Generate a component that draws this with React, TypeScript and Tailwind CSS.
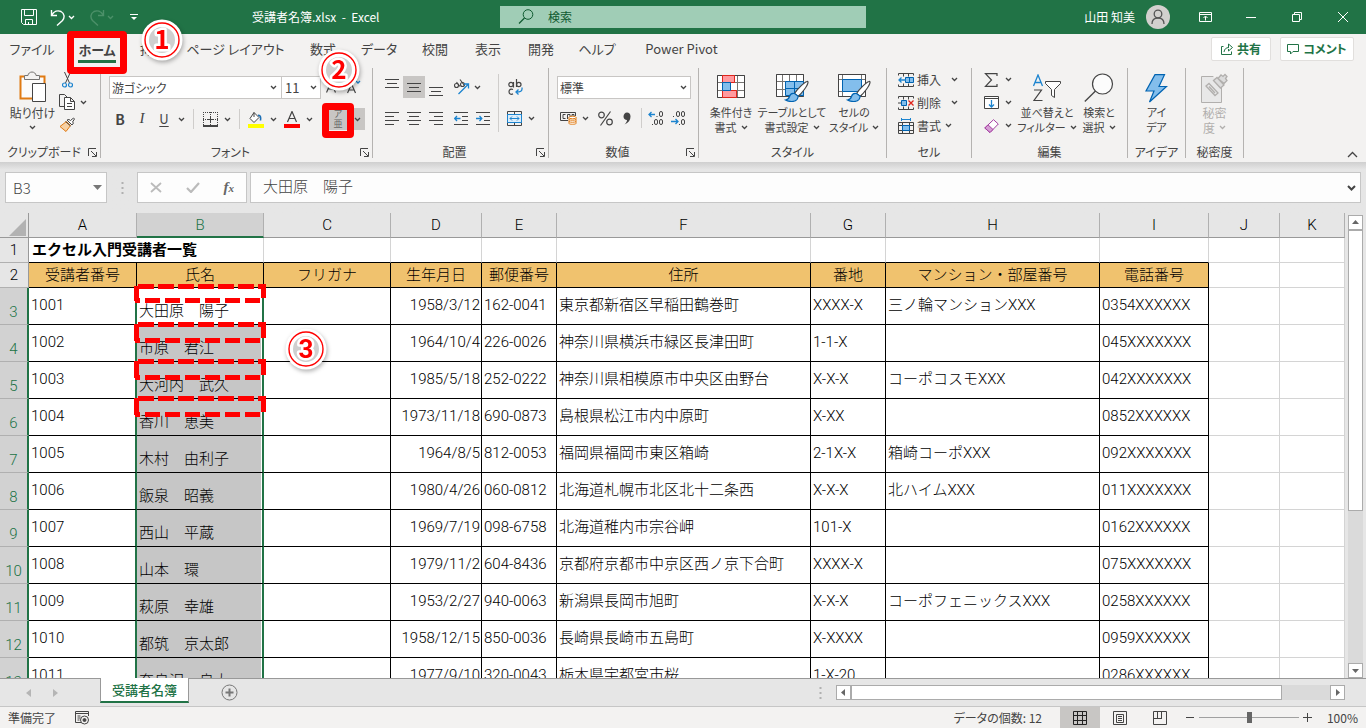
import { ReactNode } from 'react';
import clsx from 'clsx';

type Member = {
  id: string;
  name: string;
  birthday: string;
  zip: string;
  address: string;
  block: string;
  building: string;
  phone: string;
};

const members: Member[] = [
  { id: '1001', name: '大田原　陽子', birthday: '1958/3/12', zip: '162-0041', address: '東京都新宿区早稲田鶴巻町', block: 'XXXX-X', building: '三ノ輪マンションXXX', phone: '0354XXXXXX' },
  { id: '1002', name: '市原　君江', birthday: '1964/10/4', zip: '226-0026', address: '神奈川県横浜市緑区長津田町', block: '1-1-X', building: '', phone: '045XXXXXXX' },
  { id: '1003', name: '大河内　武久', birthday: '1985/5/18', zip: '252-0222', address: '神奈川県相模原市中央区由野台', block: 'X-X-X', building: 'コーポコスモXXX', phone: '042XXXXXXX' },
  { id: '1004', name: '香川　恵美', birthday: '1973/11/18', zip: '690-0873', address: '島根県松江市内中原町', block: 'X-XX', building: '', phone: '0852XXXXXX' },
  { id: '1005', name: '木村　由利子', birthday: '1964/8/5', zip: '812-0053', address: '福岡県福岡市東区箱崎', block: '2-1X-X', building: '箱崎コーポXXX', phone: '092XXXXXXX' },
  { id: '1006', name: '飯泉　昭義', birthday: '1980/4/26', zip: '060-0812', address: '北海道札幌市北区北十二条西', block: 'X-X-X', building: '北ハイムXXX', phone: '011XXXXXXX' },
  { id: '1007', name: '西山　平蔵', birthday: '1969/7/19', zip: '098-6758', address: '北海道稚内市宗谷岬', block: '101-X', building: '', phone: '0162XXXXXX' },
  { id: '1008', name: '山本　環', birthday: '1979/11/2', zip: '604-8436', address: '京都府京都市中京区西ノ京下合町', block: 'XXXX-X', building: '', phone: '075XXXXXXX' },
  { id: '1009', name: '萩原　幸雄', birthday: '1953/2/27', zip: '940-0063', address: '新潟県長岡市旭町', block: 'X-X-X', building: 'コーポフェニックスXXX', phone: '0258XXXXXX' },
  { id: '1010', name: '都筑　京太郎', birthday: '1958/12/15', zip: '850-0036', address: '長崎県長崎市五島町', block: 'X-XXXX', building: '', phone: '0959XXXXXX' },
  { id: '1011', name: '奈良沢　良太', birthday: '1977/9/10', zip: '320-0043', address: '栃木県宇都宮市桜', block: '1-X-20', building: '', phone: '0286XXXXXX' },
];

const columns = ['A', 'B', 'C', 'D', 'E', 'F', 'G', 'H', 'I', 'J', 'K'];

const headings = [
  '受講者番号',
  '氏名',
  'フリガナ',
  '生年月日',
  '郵便番号',
  '住所',
  '番地',
  'マンション・部屋番号',
  '電話番号',
];

function Svg({
  w,
  h,
  children,
  className,
}: {
  w: number;
  h: number;
  children: ReactNode;
  className?: string;
}) {
  return (
    <svg
      width={w}
      height={h}
      viewBox={`0 0 ${w} ${h}`}
      fill="none"
      stroke="currentColor"
      aria-hidden="true"
      className={clsx('shrink-0', className)}
    >
      {children}
    </svg>
  );
}

function Chevron({ className }: { className?: string }) {
  return (
    <Svg w={7} h={5} className={className}>
      <path d="M1 1l2.5 2.5L6 1" strokeWidth="1.3" />
    </Svg>
  );
}

function ToolButton({
  label,
  className,
  children,
}: {
  label: string;
  className?: string;
  children: ReactNode;
}) {
  return (
    <button
      type="button"
      aria-label={label}
      className={clsx('flex h-[22px] items-center justify-center', className)}
    >
      {children}
    </button>
  );
}

function MenuArrow({ label, className = 'w-[13px]' }: { label: string; className?: string }) {
  return (
    <ToolButton label={label} className={className}>
      <Chevron />
    </ToolButton>
  );
}

function BigButton({
  icon,
  lines,
  arrow,
  className,
}: {
  icon: ReactNode;
  lines: [string, string];
  arrow?: boolean;
  className?: string;
}) {
  return (
    <button
      type="button"
      className={clsx('flex flex-col items-center whitespace-nowrap leading-[15px]', className)}
    >
      <span className="flex h-[34px] items-center justify-center">{icon}</span>
      <span>{lines[0]}</span>
      <span className="flex items-center gap-1">
        {lines[1]}
        {arrow ? <Chevron /> : null}
      </span>
    </button>
  );
}

function Group({
  title,
  launcher,
  className,
  children,
}: {
  title: string;
  launcher?: boolean;
  className: string;
  children: ReactNode;
}) {
  return (
    <section
      aria-label={title}
      className={clsx('flex h-[90px] shrink-0 flex-col border-r border-[#b5b3b1]', className)}
    >
      <div className="flex min-h-0 flex-1">{children}</div>
      <div className="flex h-3 items-center text-xs leading-3">
        <span className="flex-1 text-center">{title}</span>
        {launcher ? (
          <button type="button" aria-label={`${title}の設定`} className="mr-[3px]">
            <Svg w={9} h={9}>
              <path d="M.5 8V.5H8M3 3l5 5M8.5 4v4.5H4" />
            </Svg>
          </button>
        ) : null}
      </div>
    </section>
  );
}

function Badge({ n, className }: { n: number; className: string }) {
  return (
    <svg
      width="46"
      height="46"
      viewBox="0 0 46 46"
      role="img"
      aria-label={`手順${n}`}
      className={clsx('absolute z-20 drop-shadow-[1px_2px_2px_rgba(0,0,0,0.3)]', className)}
    >
      <circle cx="23" cy="23" r="20.5" fill="#fff" />
      <circle cx="23" cy="23" r="13" fill="#cfcfcf" />
      <circle cx="23" cy="23" r="17" fill="none" stroke="#f00" strokeWidth="1.4" />
      <text
        x="23"
        y="32"
        textAnchor="middle"
        fill="#f00"
        stroke="#fff"
        strokeWidth="5"
        strokeLinejoin="round"
        paintOrder="stroke"
        className="text-[26px] font-bold"
      >
        {n}
      </text>
    </svg>
  );
}

/* 横線を並べた配置アイコン */
function Lines({ kind, rows = 4 }: { kind: 'left' | 'center' | 'right'; rows?: number }) {
  const lines = Array.from({ length: rows }, (_, i) => {
    const short = i % 2 === 1;
    const x1 = !short || kind === 'left' ? 0 : kind === 'center' ? 2 : 5;
    const x2 = !short || kind === 'right' ? 14 : kind === 'center' ? 12 : 9;
    return `M${x1} ${i * 4 + 0.5}H${x2}`;
  });
  return (
    <Svg w={14} h={rows * 4 - 3}>
      <path d={lines.join('')} />
    </Svg>
  );
}

function Indent({ out }: { out?: boolean }) {
  return (
    <Svg w={14} h={13}>
      <path d="M0 .5H14M8 4.5h6M8 8.5h6M0 12.5H14" />
      <path
        d={out ? 'M6.5 6.5H1M3 4L.7 6.5 3 9' : 'M0 6.5h5.5M3.5 4l2.3 2.5L3.5 9'}
        stroke="#1c84cf"
        strokeWidth="1.3"
      />
    </Svg>
  );
}

function Brush() {
  return (
    <>
      <path
        d="M31 7.5c-3 1-9.500 7.500-12.500 12l3.500 3C26 19 31.500 12 32 8.500 32 7.500 31.500 7.300 31 7.500z"
        fill="#fff"
        stroke="#444"
        strokeWidth="1.2"
      />
      <path
        d="M18.5 19.500c-2.500-.5-4.500.8-5 3-.5 2-1.500 3-4 3.500 4 2.200 9.500 2 11.500-.5 1-1.500 1.200-2.500 1-3.500z"
        fill="#83beec"
        stroke="#0063b1"
        strokeWidth="1.2"
      />
    </>
  );
}

const tableLines = 'M.5 .5h27v22H.5zM6.5 0v23M13.5 0v23M20.5 0v23M0 7.5h28M0 15.5h28';

function TitleBar() {
  return (
    <header className="flex h-[34px] shrink-0 items-center bg-[#217346] text-xs text-white">
      <div className="flex w-[252px] items-center pl-[14px]">
        <ToolButton label="上書き保存" className="w-[30px]">
          <Svg w={16} h={16}>
            <path d="M.5 .5h15v15h-13l-2-2zM3.5 .5v6h9v-6M4.5 15.5v-5h7v5M7.5 13v2.5" />
          </Svg>
        </ToolButton>
        <ToolButton label="元に戻す" className="w-7">
          <Svg w={16} h={17}>
            <path d="M1.5 1v5.5H7M1.5 6.500C4 2 8 1 11 2.500c3.500 2 4 6 1.500 9L7 16.500" strokeWidth="1.4" />
          </Svg>
        </ToolButton>
        <Chevron className="-ml-1 mt-px" />
        <ToolButton label="やり直し" className="ml-2 w-7 text-[#4c9069]">
          <Svg w={16} h={17}>
            <path d="M14.5 1v5.5H9M14.5 6.500C12 2 8 1 5 2.500 1.500 4.500 1 8.500 3.500 11.500L9 16.500" strokeWidth="1.4" />
          </Svg>
        </ToolButton>
        <Chevron className="-ml-1 mt-px text-[#4c9069]" />
        <ToolButton label="クイック アクセス" className="ml-2 w-6">
          <Svg w={8} h={7}>
            <path d="M0 .5h8" />
            <path d="M1 3h6L4 6z" fill="currentColor" stroke="none" />
          </Svg>
        </ToolButton>
      </div>
      <h1 className="w-[248px] whitespace-pre">受講者名簿.xlsx  -  Excel</h1>
      <label className="flex h-[22px] w-[366px] items-center bg-[#a0cdb6] pl-[18px] text-[#0f5a30]">
        <Svg w={16} h={16}>
          <circle cx="10" cy="5.5" r="4.8" />
          <path d="M6.5 9L1 14.5" strokeWidth="1.3" />
        </Svg>
        <input
          type="search"
          aria-label="検索"
          placeholder="検索"
          className="ml-[14px] min-w-0 flex-1 bg-transparent outline-none placeholder:text-[#0f5a30]"
        />
      </label>
      <div className="flex flex-1 items-center justify-end">
        <span>山田 知美</span>
        <Svg w={24} h={24} className="ml-[11px] mr-3">
          <circle cx="12" cy="12" r="12" fill="#d2d0ce" stroke="none" />
          <g stroke="#555" strokeWidth="1.3">
            <circle cx="12" cy="9" r="3.8" />
            <path d="M6 19c0-4 2.500-6 6-6s6 2 6 6" />
          </g>
        </Svg>
        <ToolButton label="リボンの表示オプション" className="w-[46px]">
          <Svg w={13} h={10}>
            <path d="M.5 .5h12v9H.5zM0 2.500h13M6.500 8.500v-4M4.500 6l2-2 2 2" />
          </Svg>
        </ToolButton>
        <ToolButton label="最小化" className="w-[46px]">
          <Svg w={10} h={1}>
            <path d="M0 .5h10" />
          </Svg>
        </ToolButton>
        <ToolButton label="元のサイズに戻す" className="w-[46px]">
          <Svg w={10} h={10}>
            <path d="M.5 2.500h7v7h-7zM2.500 2.500v-2h7v7h-2" />
          </Svg>
        </ToolButton>
        <ToolButton label="閉じる" className="w-[46px]">
          <Svg w={10} h={10}>
            <path d="M0 0l10 10M10 0L0 10" />
          </Svg>
        </ToolButton>
      </div>
    </header>
  );
}

function TabRow() {
  const tab = 'shrink-0 whitespace-nowrap text-center';
  return (
    <nav className="flex h-[34px] shrink-0 items-center pb-1 text-[13px]">
      <button type="button" className={`${tab} w-16`}>ファイル</button>
      <button type="button" className={`${tab} relative w-[66px] font-bold`}>
        <span className="inline-block border-b-[3px] border-[#217346] pt-1 leading-5">ホーム</span>
        <span className="absolute -top-[5px] left-[3px] h-[43px] w-[60px] rounded-[4px] border-[7px] border-[#f00]" />
      </button>
      <button type="button" className={`${tab} relative w-[46px]`}>
        挿入
        <Badge n={1} className="-top-[23px] left-[9px]" />
      </button>
      <button type="button" className={`${tab} w-[119px]`}>ページ レイアウト</button>
      <button type="button" className={`${tab} relative w-14`}>
        数式
        <Badge n={2} className="left-[21px] top-[7px]" />
      </button>
      <button type="button" className={`${tab} w-14`}>データ</button>
      <button type="button" className={`${tab} w-14`}>校閲</button>
      <button type="button" className={`${tab} w-[50px]`}>表示</button>
      <button type="button" className={`${tab} w-14`}>開発</button>
      <button type="button" className={`${tab} w-14`}>ヘルプ</button>
      <button type="button" className={`${tab} w-[113px]`}>Power Pivot</button>
      <div className="ml-auto flex gap-[9px] pr-3 text-xs font-bold text-[#217346]">
        <button type="button" className="flex h-6 w-[60px] items-center justify-center gap-1 rounded-[2px] border border-[#e1dfdd] bg-white">
          <Svg w={12} h={12}>
            <path d="M2.500 3.500h-2v8h10v-3M3 9c.5-3 2-4.500 5-4.500M7.500 1l4 3.500-4 3.500V6M7.500 1v3" />
          </Svg>
          共有
        </button>
        <button type="button" className="flex h-6 w-[74px] items-center justify-center gap-1 rounded-[2px] border border-[#e1dfdd] bg-white">
          <Svg w={12} h={11}>
            <path d="M.5 .5h11v7H6L3.500 10V7.500h-3z" />
          </Svg>
          コメント
        </button>
      </div>
    </nav>
  );
}

function ClipboardGroup() {
  return (
    <Group title="クリップボード" launcher className="w-[101px]">
      <button type="button" className="flex w-[61px] flex-col items-center whitespace-nowrap pl-1 pt-[3px] leading-[15px]">
        <Svg w={28} h={32}>
          <path d="M5 5.500H1.500v22h24V5.500H21" stroke="#e07a12" strokeWidth="2" fill="#fcfbfa" />
          <path d="M5.500 8.500v-4h3.500c0-2 2-3.500 4-3.500s4 1.500 4 3.500h3.500v4z" fill="#f3f2f1" stroke="#767472" />
          <path d="M13.500 12.500h13v18h-13z" fill="#fff" stroke="#444" />
        </Svg>
        <span className="pt-[2px]">貼り付け</span>
        <Chevron className="mt-[5px]" />
      </button>
      <div className="flex w-[38px] flex-col pt-px">
        <ToolButton label="切り取り" className="w-3">
          <Svg w={11} h={16}>
            <path d="M2.500 0l5 11M8.500 0l-5 11" />
            <g stroke="#1c84cf" strokeWidth="1.2">
              <circle cx="2.5" cy="13" r="2" />
              <circle cx="8.5" cy="13" r="2" />
            </g>
          </Svg>
        </ToolButton>
        <div className="flex">
          <ToolButton label="コピー" className="h-6 w-3">
            <Svg w={16} h={16}>
              <path d="M5 12.500H.5V.5h5l3 3" />
              <path d="M5.500 3.500h6l4 4v8h-10zM11.500 3.500v4h4M8 9.500h5M8 12.500h5" fill="#fff" />
            </Svg>
          </ToolButton>
          <MenuArrow label="コピーのオプション" className="ml-1 h-6 w-3" />
        </div>
        <ToolButton label="書式のコピー" className="w-3">
          <Svg w={16} h={15}>
            <path d="M7.500 4.500L1 9.500l6 5 4.500-6z" fill="#f7d1a4" stroke="#e07a12" />
            <path d="M6.500 4.500l5 4.500M8 3l5 5 1.500-2-1-1L15.500 2l-1-1-3 2.500-1.500-1z" fill="#fff" stroke="#444" />
          </Svg>
        </ToolButton>
      </div>
    </Group>
  );
}

function FontGroup() {
  return (
    <Group title="フォント" launcher className="w-[272px]">
      <div className="flex flex-col pl-2 pt-2">
        <div className="flex h-[23px]">
          <label className="flex w-[173px] items-center border border-[#c8c6c4] bg-white pr-1 text-xs">
            <select aria-label="フォント" className="min-w-0 flex-1 appearance-none pl-[2px] outline-none">
              <option>游ゴシック</option>
            </select>
            <Chevron />
          </label>
          <label className="-ml-px flex w-10 items-center border border-[#c8c6c4] bg-white pr-[3px] text-[13px]">
            <select aria-label="フォント サイズ" className="min-w-0 flex-1 appearance-none pl-[3px] outline-none">
              <option>11</option>
            </select>
            <Chevron />
          </label>
          <ToolButton label="フォント サイズの拡大" className="w-6">
            <Svg w={14} h={14}>
              <path d="M.5 12.500L5 2l4.500 10.500M2 9h6" strokeWidth="1.2" />
              <path d="M9 4l2-2 2 2" stroke="#1c84cf" strokeWidth="1.3" />
            </Svg>
          </ToolButton>
          <ToolButton label="フォント サイズの縮小" className="w-[18px]">
            <Svg w={14} h={16}>
              <path d="M.5 14L4.500 5l4 9M2 11h5" strokeWidth="1.2" />
              <path d="M9 2l2 2 2-2" stroke="#1c84cf" strokeWidth="1.3" />
            </Svg>
          </ToolButton>
        </div>
        <div className="mt-[9px] flex h-[22px] items-center">
          <ToolButton label="太字" className="w-[22px] text-[14px] font-bold">B</ToolButton>
          <ToolButton label="斜体" className="w-[22px] font-[Liberation_Serif] text-[15px] italic">I</ToolButton>
          <ToolButton label="下線" className="w-[22px] text-[13px] underline underline-offset-2">U</ToolButton>
          <MenuArrow label="下線の種類" />
          <span className="mx-[5px] h-5 w-px bg-[#cfcdcb]" />
          <ToolButton label="罫線" className="w-[22px]">
            <Svg w={15} h={15}>
              <path d="M.5 0v13M7.500 0v13M14.500 0v13M0 .5h15M0 7.500h15" strokeDasharray="1 1" />
              <path d="M4 7.500h7M7.500 4v7" />
              <path d="M0 14h15" strokeWidth="2" />
            </Svg>
          </ToolButton>
          <MenuArrow label="罫線の種類" />
          <span className="mx-[5px] h-5 w-px bg-[#cfcdcb]" />
          <ToolButton label="塗りつぶしの色" className="w-[22px]">
            <Svg w={16} h={17}>
              <path d="M6 1.500l5 5-5 5-4-4zM6 1.500V6" fill="#fff" />
              <path d="M10 4.500c2.500-.5 3 1.500 2.500 5" stroke="#1c6fb5" strokeWidth="1.6" />
              <path d="M0 15h16" stroke="#ff0" strokeWidth="4" />
            </Svg>
          </ToolButton>
          <MenuArrow label="塗りつぶしの色の選択" />
          <ToolButton label="フォントの色" className="ml-px w-[22px]">
            <Svg w={16} h={17}>
              <path d="M3.500 11L8 .5l4.500 10.500M5 7.500h6" strokeWidth="1.2" />
              <path d="M0 15h16" stroke="#f00" strokeWidth="4" />
            </Svg>
          </ToolButton>
          <MenuArrow label="フォントの色の選択" />
          <div className="relative ml-[11px] flex bg-[#c8c6c4]">
            <ToolButton label="ふりがなの表示/非表示" className="w-[22px] flex-col text-[9px] leading-[10px] text-[#666]">
              <span>ア</span>
              <span>亜</span>
            </ToolButton>
            <MenuArrow label="ふりがなの設定" className="w-4" />
            <span className="absolute -left-[5px] -top-[5px] h-[35px] w-8 rounded-[4px] border-[7px] border-[#f00]" />
          </div>
        </div>
      </div>
    </Group>
  );
}

function AlignGroup() {
  return (
    <Group title="配置" launcher className="w-44">
      <div className="flex flex-col pl-2 pt-2">
        <div className="flex h-[22px]">
          <ToolButton label="上揃え" className="w-[22px] pb-2"><Lines kind="center" rows={3} /></ToolButton>
          <ToolButton label="上下中央揃え" className="w-[22px] bg-[#c8c6c4]"><Lines kind="center" rows={3} /></ToolButton>
          <ToolButton label="下揃え" className="w-[22px] pt-2"><Lines kind="center" rows={3} /></ToolButton>
          <ToolButton label="方向" className="ml-[2px] w-6">
            <Svg w={17} h={16}>
              <g strokeWidth="1.1">
                <circle cx="3.5" cy="6.5" r="2" />
                <path d="M3.500 3l3.500 4.500M7 .5l4.500 6" />
                <circle cx="9.5" cy="5.5" r="2" />
              </g>
              <path d="M5.500 15L15.500 5M11 5h4.500v4.500" stroke="#1c84cf" strokeWidth="1.3" />
            </Svg>
          </ToolButton>
          <MenuArrow label="方向の選択" className="w-2" />
        </div>
        <div className="mt-[9px] flex h-[22px]">
          <ToolButton label="左揃え" className="w-[22px]"><Lines kind="left" /></ToolButton>
          <ToolButton label="中央揃え" className="w-[22px]"><Lines kind="center" /></ToolButton>
          <ToolButton label="右揃え" className="w-[22px]"><Lines kind="right" /></ToolButton>
          <ToolButton label="インデントを減らす" className="ml-[3px] w-[22px]"><Indent out /></ToolButton>
          <ToolButton label="インデントを増やす" className="w-[22px]"><Indent /></ToolButton>
        </div>
      </div>
      <span className="ml-1 mt-[6px] h-[58px] w-px bg-[#cfcdcb]" />
      <div className="flex flex-col pl-1 pt-2">
        <ToolButton label="折り返して全体を表示する" className="w-6">
          <Svg w={15} h={17}>
            <g strokeWidth="1.2">
              <circle cx="3" cy="5.5" r="2.2" />
              <path d="M5.500 3v5.500M8.500 0v8M5 10.500c-2-1-4 0-4 2.200s2 3.200 4 2.200" />
              <circle cx="10.8" cy="5.5" r="2.2" />
            </g>
            <path d="M14 8.500c.5 4-1.500 4.500-6 4.500M10.500 10.500L8 13l2.500 2.500" stroke="#1c84cf" strokeWidth="1.3" />
          </Svg>
        </ToolButton>
        <div className="mt-[9px] flex">
          <ToolButton label="セルを結合して中央揃え" className="w-[22px]">
            <Svg w={15} h={15}>
              <path d="M.5 .5h14v14H.5zM7.500 0v15" />
              <path d="M.5 3.500h14v8H.5z" fill="#dcedfa" stroke="#1c84cf" />
              <path d="M3 7.500h9M5 5.500l-2 2 2 2M10 5.500l2 2-2 2" stroke="#1c84cf" />
            </Svg>
          </ToolButton>
          <MenuArrow label="結合の種類" />
        </div>
      </div>
    </Group>
  );
}

function NumberGroup() {
  return (
    <Group title="数値" launcher className="w-[150px]">
      <div className="flex flex-col pl-2 pt-2">
        <label className="flex h-[23px] w-[134px] items-center border border-[#c8c6c4] bg-white pr-[3px] text-xs">
          <select aria-label="表示形式" className="min-w-0 flex-1 appearance-none pl-[2px] outline-none">
            <option>標準</option>
          </select>
          <Chevron />
        </label>
        <div className="mt-2 flex h-[22px] items-center">
          <ToolButton label="通貨表示形式" className="w-[22px]">
            <Svg w={17} h={14}>
              <path d="M8 9.500H.5v-8h15V5M5.500 3.500H3v4h2.500M7.500 8V3.500H10v3M14 5V3.500h-2V6" />
              <path d="M9 6.500v6c0 1 7 1 7 0v-6z" fill="#fff" stroke="#e07a12" />
              <path d="M9 8.500c1 1 6 1 7 0M9 10.500c1 1 6 1 7 0" stroke="#e07a12" />
              <ellipse cx="12.5" cy="6.5" rx="3.5" ry="1.3" fill="#fff" stroke="#e07a12" />
            </Svg>
          </ToolButton>
          <MenuArrow label="通貨の選択" className="w-3" />
          <ToolButton label="パーセント スタイル" className="w-7">
            <Svg w={15} h={15}>
              <g strokeWidth="1.2">
                <circle cx="3.5" cy="4" r="2.8" />
                <circle cx="11.5" cy="11" r="2.8" />
                <path d="M12.500 .5l-10 14" />
              </g>
            </Svg>
          </ToolButton>
          <ToolButton label="桁区切りスタイル" className="w-4">
            <Svg w={8} h={13}>
              <path d="M4 .5c2 0 3.500 1.500 3.500 4C7.500 8 5.500 11 1.500 12.500c1.500-1.500 2.500-3 2.500-4.500C2 8 .5 6.500 .5 4.500S2 .5 4 .5z" fill="currentColor" stroke="none" />
            </Svg>
          </ToolButton>
          <span className="ml-[6px] mr-[3px] h-5 w-px bg-[#cfcdcb]" />
          <ToolButton label="小数点以下の表示桁数を増やす" className="w-[22px]">
            <Svg w={16} h={16}>
              <path d="M7 4.500H1M3.500 2L1 4.500 3.500 7" stroke="#1c84cf" strokeWidth="1.3" />
              <path d="M8.500 6.500h1M4 14.500h1" />
              <rect x="11.5" y="1.5" width="3" height="5" rx="1.5" />
              <rect x="6.5" y="9.5" width="3" height="5" rx="1.5" />
              <rect x="11.5" y="9.5" width="3" height="5" rx="1.5" />
            </Svg>
          </ToolButton>
          <ToolButton label="小数点以下の表示桁数を減らす" className="w-[22px]">
            <Svg w={16} h={16}>
              <path d="M1 11.500h7M5.500 9L8 11.500 5.500 14" stroke="#1c84cf" strokeWidth="1.3" />
              <path d="M3 6.500h1M9 14.500h1" />
              <rect x="6.5" y="1.5" width="3" height="5" rx="1.5" />
              <rect x="11.5" y="1.5" width="3" height="5" rx="1.5" />
              <rect x="11.5" y="9.5" width="3" height="5" rx="1.5" />
            </Svg>
          </ToolButton>
        </div>
      </div>
    </Group>
  );
}

function StyleGroup() {
  return (
    <Group title="スタイル" className="w-[188px]">
      <div className="flex pl-[5px] pt-[3px] text-[11px]">
        <BigButton
          className="w-[54px]"
          lines={['条件付き', '書式']}
          arrow
          icon={
            <Svg w={28} h={23} className="mb-1">
              <path d={tableLines} fill="#fff" stroke="#767472" />
              <path d="M.5 .5h27v22H.5z" />
              <path d="M5.500 .5h12v7h-12zM5.500 15.500h14v7h-14z" fill="#ff9a9f" stroke="#e0241b" />
              <path d="M5.500 7.500h8v8h-8z" fill="#83beec" stroke="#0063b1" />
            </Svg>
          }
        />
        <BigButton
          className="w-[68px]"
          lines={['テーブルとして', '書式設定']}
          arrow
          icon={
            <Svg w={33} h={28}>
              <path d={tableLines} fill="#fff" stroke="#767472" />
              <path d="M.5 .5h27v22H.5z" />
              <path d="M9.500 7.500h18v14h-18z" fill="#83beec" stroke="#0063b1" />
              <path d="M18.500 7v15M9 14.500h19" stroke="#0063b1" />
              <Brush />
            </Svg>
          }
        />
        <BigButton
          className="w-14"
          lines={['セルの', 'スタイル']}
          arrow
          icon={
            <Svg w={33} h={28}>
              <path d="M.5 .5h27v22H.5zM4.500 0v23M23.500 0v23M0 5.500h28M0 17.500h28" fill="#fff" stroke="#767472" />
              <path d="M.5 .5h27v22H.5z" />
              <path d="M4.500 5.500h19v12h-19z" fill="#83beec" stroke="#0063b1" />
              <Brush />
            </Svg>
          }
        />
      </div>
    </Group>
  );
}

function CellGroup() {
  const row = 'flex h-[23px] items-center text-xs';
  return (
    <Group title="セル" className="w-[85px]">
      <div className="flex flex-col pl-[11px]">
        <button type="button" className={row}>
          <Svg w={16} h={14}>
            <path d="M.5 2.500v-2h15v2M5.500 .5v3M10.500 .5v3M.5 11.500v2h15v-2M5.500 10.500v3M10.500 10.500v3" />
            <path d="M7.500 4.500h8v5h-8zM11.500 4.500v5" fill="#83beec" stroke="#0063b1" />
            <path d="M8 7H1M3.500 4.500L1 7l2.500 2.500" stroke="#1c84cf" strokeWidth="1.3" />
          </Svg>
          <span className="ml-[3px] w-[34px] text-left">挿入</span>
          <Chevron />
        </button>
        <button type="button" className={row}>
          <Svg w={16} h={14}>
            <path d="M.5 2.500v-2h15v2M5.500 .5v3M10.500 .5v3M.5 11.500v2h15v-2M5.500 10.500v3M10.500 10.500v3M0 7h3" />
            <path d="M3.500 4.500h5v5h-5z" fill="#83beec" stroke="#0063b1" />
            <path d="M10.500 4.500l5 5M15.500 4.500l-5 5" stroke="#e0241b" strokeWidth="1.3" />
          </Svg>
          <span className="ml-[3px] w-[34px] text-left">削除</span>
          <Chevron />
        </button>
        <button type="button" className={row}>
          <Svg w={16} h={16}>
            <path d="M.5 4.500h15v11H.5zM4.500 4v12M11.500 4v12M0 7.500h16M0 12.500h16" />
            <path d="M4.500 7.500h7v5h-7z" fill="#83beec" stroke="#0063b1" />
            <path d="M3.500 0v3M12.500 0v3M3.500 1.500h9" stroke="#1c84cf" />
          </Svg>
          <span className="ml-[3px] w-7 text-left">書式</span>
          <Chevron />
        </button>
      </div>
    </Group>
  );
}

function EditGroup() {
  const row = 'flex h-[23px] items-center gap-[6px]';
  return (
    <Group title="編集" className="w-[156px]">
      <div className="flex w-[46px] flex-col pl-3">
        <button type="button" aria-label="オート SUM" className={row}>
          <Svg w={15} h={14}>
            <path d="M13 3V.7H1.500L7.500 7l-6 6.300H13V11" strokeWidth="1.2" />
          </Svg>
          <Chevron />
        </button>
        <button type="button" aria-label="フィル" className={row}>
          <Svg w={15} h={13}>
            <path d="M.5 .5h14v12H.5zM0 2.500h15" fill="#fff" />
            <path d="M7.500 4v7M5 8.500L7.500 11 10 8.500" stroke="#1c84cf" strokeWidth="1.3" />
          </Svg>
          <Chevron />
        </button>
        <button type="button" aria-label="クリア" className={row}>
          <Svg w={15} h={14}>
            <path d="M9.500 .7L14.300 5 6 13.500 .8 9z" fill="#fff" stroke="#a33ea1" />
            <path d="M4 5.800L.8 9 6 13.500l3-3z" fill="#d59dd3" stroke="#a33ea1" />
          </Svg>
          <Chevron />
        </button>
      </div>
      <div className="flex pt-[3px] text-[11px]">
        <BigButton
          className="w-[58px]"
          lines={['並べ替えと', 'フィルター']}
          arrow
          icon={
            <Svg w={29} h={28}>
              <path d="M.5 12L5 1l4.500 11M2 8.500h6" stroke="#1c84cf" strokeWidth="1.3" />
              <path d="M1 16h7.500L1 26.500h8.500" strokeWidth="1.2" />
              <path d="M12.500 7.500h15v2l-6 6v8l-3-2v-6l-6-6z" fill="#fff" />
            </Svg>
          }
        />
        <BigButton
          className="w-[46px]"
          lines={['検索と', '選択']}
          arrow
          icon={
            <Svg w={30} h={30}>
              <circle cx="18.5" cy="11" r="10" fill="#fcfcfc" strokeWidth="1.2" />
              <path d="M11.500 18L.8 28.500" strokeWidth="1.3" />
            </Svg>
          }
        />
      </div>
    </Group>
  );
}

function Ribbon() {
  return (
    <div className="flex h-[94px] shrink-0 text-[#444]">
      <ClipboardGroup />
      <FontGroup />
      <AlignGroup />
      <NumberGroup />
      <StyleGroup />
      <CellGroup />
      <EditGroup />
      <Group title="アイデア" className="w-[58px]">
        <BigButton
          className="flex-1 pt-[3px] text-[11px]"
          lines={['アイ', 'デア']}
          icon={
            <Svg w={23} h={29}>
              <path d="M10 .7h9.500L14 12.500h7.500L4.500 28l4.500-11H1z" fill="#83beec" stroke="#0063b1" strokeWidth="1.2" />
            </Svg>
          }
        />
      </Group>
      <Group title="秘密度" className="w-[58px]">
        <BigButton
          className="flex-1 pt-[3px] text-xs text-[#b1afad]"
          lines={['秘密', '度']}
          arrow
          icon={
            <Svg w={28} h={31}>
              <path d="M.5 3.500h20v26H.5z" fill="#e8e8e8" />
              <path d="M12 3l6-3 10 8-3 7-5-1z" fill="#f3f2f1" stroke="none" />
              <path d="M5 13l3-2.500 9 9.500-3 2.500zM8 13.500l6 6.500" strokeWidth="1.3" />
              <path d="M12.500 7.500l3.500-3 7 7.500-3.500 3zM17 5.500l3-3.500 2 1.500 2-2 2 2-1.500 2 1.500 2-3 3z" fill="#dcdcdc" strokeWidth="1.3" />
            </Svg>
          }
        />
      </Group>
      <button type="button" aria-label="リボンを折りたたむ" className="ml-auto mr-2 self-end pb-1">
        <Svg w={11} h={7}>
          <path d="M1 6l4.500-4.500L10 6" strokeWidth="1.3" />
        </Svg>
      </button>
    </div>
  );
}

function Dots() {
  return (
    <Svg w={3} h={12} className="text-[#b0b0b0]">
      <path d="M1.500 0v12" strokeWidth="2" strokeDasharray="2 3" />
    </Svg>
  );
}

function FormulaBar() {
  return (
    <div className="flex h-[51px] shrink-0 items-center bg-[#e6e6e6] bg-linear-to-b from-[#cfcfcf] to-[#e6e6e6] to-15% px-[5px] text-[#444]">
      <label className="flex h-[31px] w-[102px] items-center border border-[#c6c6c6] bg-[#fdfdfd] pl-[7px] pr-1">
        <input aria-label="名前ボックス" defaultValue="B3" className="min-w-0 flex-1 text-[15px] font-light outline-none" />
        <Svg w={9} h={5}>
          <path d="M0 0h9L4.500 5z" fill="#777" stroke="none" />
        </Svg>
      </label>
      <div className="flex w-[30px] justify-center"><Dots /></div>
      <div className="flex h-[31px] w-[110px] items-center justify-around border border-[#c6c6c6] bg-[#fdfdfd]">
        <button type="button" aria-label="キャンセル" className="text-[#bbb]">
          <Svg w={12} h={11}><path d="M1 1l10 9M11 1L1 10" strokeWidth="1.8" /></Svg>
        </button>
        <button type="button" aria-label="入力" className="text-[#bbb]">
          <Svg w={14} h={11}><path d="M1 6l4 4 8-9" strokeWidth="2.2" /></Svg>
        </button>
        <button type="button" aria-label="関数の挿入" className="font-[Liberation_Serif] text-[15px] font-bold italic leading-4 text-[#666]">
          f<span className="text-[11px]">x</span>
        </button>
      </div>
      <label className="ml-[3px] flex h-[31px] flex-1 items-center border border-[#c6c6c6] bg-[#fdfdfd] pl-3 pr-1">
        <input aria-label="数式バー" defaultValue="大田原　陽子" className="min-w-0 flex-1 pb-1 text-[15px] font-light outline-none [font-feature-settings:normal]" />
        <Svg w={9} h={6}>
          <path d="M1 1l3.500 3.500L8 1" strokeWidth="2" />
        </Svg>
      </label>
    </div>
  );
}

/* ふりがなが入る余白を囲む破線の枠 */
function PhoneticFrame({ first }: { first: boolean }) {
  const h = first ? 19 : 21;
  return (
    <svg
      width="132"
      height={h}
      viewBox={`0 0 132 ${h}`}
      fill="none"
      stroke="#f00"
      strokeWidth="5"
      aria-hidden="true"
      className={clsx('absolute -left-[3px] z-10', first ? '-top-1' : '-top-[3px]')}
    >
      <path d="M4 2.500H132" strokeDasharray="16 4" />
      <path d={`M1 ${h - 2.5}H126`} strokeDasharray="5 5 15 5 15 5 15 5 15 5 15 5 15 5 15 5" />
      <path d={`M2.500 2V${h - 2}M129.500 2V${h - 5}`} />
    </svg>
  );
}

function Sheet() {
  const cell = 'overflow-hidden whitespace-nowrap border-b border-r border-black pb-[2px] pl-[2px]';
  const empty = 'border-b border-r border-[#d4d4d4]';
  const rowHead = 'border-b border-r border-b-[#b0b0b0] border-r-[#999] bg-[#e6e6e6] font-light';

  return (
    <table className="w-full table-fixed border-separate border-spacing-0 font-[Roboto,'Noto_Sans_CJK_JP',sans-serif] text-[15px] font-light leading-[22px] text-black [font-feature-settings:normal]">
      <colgroup>
        <col className="w-[29px]" />
        <col className="w-[108px]" />
        <col className="w-[127px]" />
        <col className="w-[127px]" />
        <col className="w-[91px]" />
        <col className="w-[75px]" />
        <col className="w-[254px]" />
        <col className="w-[75px]" />
        <col className="w-[214px]" />
        <col className="w-[109px]" />
        <col className="w-[71px]" />
        <col />
      </colgroup>
      <thead>
        <tr className="h-[25px] bg-[#e6e6e6]">
          <th className="border-b border-r border-[#999]" aria-label="すべて選択">
            <Svg w={17} h={17} className="ml-auto mr-[2px] mt-1">
              <path d="M17 0v17H0z" fill="#b2b2b2" stroke="none" />
            </Svg>
          </th>
          {columns.map((name) => (
            <th
              key={name}
              scope="col"
              className={clsx(
                'border-r border-[#b0b0b0] font-light',
                name === 'B'
                  ? 'border-b-2 border-b-[#217346] bg-[#d2d2d2] text-[#217346]'
                  : 'border-b border-b-[#999]',
              )}
            >
              {name}
            </th>
          ))}
        </tr>
      </thead>
      <tbody>
        <tr className="h-[25px]">
          <th scope="row" className={rowHead}>1</th>
          <td colSpan={2} className="whitespace-nowrap border-b border-r border-b-black border-r-[#d4d4d4] pl-[3px] font-bold">
            エクセル入門受講者一覧
          </td>
          {columns.slice(2).map((name, i) => (
            <td key={name} className={clsx('border-b border-r border-r-[#d4d4d4]', i < 7 ? 'border-b-black' : 'border-b-[#d4d4d4]')} />
          ))}
        </tr>
        <tr className="h-[25px]">
          <th scope="row" className={rowHead}>2</th>
          {headings.map((heading) => (
            <td key={heading} className="whitespace-nowrap border-b border-r border-black bg-[#f0c26e] text-center">
              {heading}
            </td>
          ))}
          <td className={empty} />
          <td className={empty} />
        </tr>
        {members.map((m, i) => (
          <tr key={m.id} className="h-[37px]">
            <th
              scope="row"
              className="border-b border-r-2 border-b-[#b0b0b0] border-r-[#217346] bg-[#d2d2d2] pb-px align-bottom font-light text-[#217346]"
            >
              {i + 3}
            </th>
            <td className={`${cell} border-r-2 border-r-[#217346]`}>{m.id}</td>
            <td
              className={clsx(
                'relative whitespace-nowrap border-b border-r-2 border-b-black border-r-[#217346] pb-[2px] pl-[2px] align-bottom shadow-[inset_-1px_0_0_#fff]',
                i > 0 && 'bg-[#c6c6c6]',
              )}
            >
              {m.name}
              {i < 4 ? <PhoneticFrame first={i === 0} /> : null}
            </td>
            <td className="relative border-b border-r border-black">
              {i === 1 ? <Badge n={3} className="left-[19px] top-[1px]" /> : null}
            </td>
            <td className={`${cell} pr-px text-right`}>{m.birthday}</td>
            <td className={cell}>{m.zip}</td>
            <td className={cell}>{m.address}</td>
            <td className={cell}>{m.block}</td>
            <td className={cell}>{m.building}</td>
            <td className={cell}>{m.phone}</td>
            <td className={empty} />
            <td className={empty} />
          </tr>
        ))}
      </tbody>
    </table>
  );
}

function ScrollArrow({ label, d }: { label: string; d: string }) {
  return (
    <button
      type="button"
      aria-label={label}
      className="flex h-[15px] w-[15px] shrink-0 items-center justify-center border border-[#ababab] bg-white"
    >
      <Svg w={7} h={7}>
        <path d={d} fill="#666" stroke="none" />
      </Svg>
    </button>
  );
}

function SheetTabs() {
  return (
    <div className="flex h-7 shrink-0 border-t border-[#999] bg-[#e6e6e6]">
      <div className="flex w-[100px] items-center gap-[22px] pl-[26px] text-[#b5b5b5]">
        <Svg w={5} h={8}><path d="M5 0v8L0 4z" fill="currentColor" stroke="none" /></Svg>
        <Svg w={5} h={8}><path d="M0 0v8l5-4z" fill="currentColor" stroke="none" /></Svg>
      </div>
      <button
        type="button"
        className="-mt-px h-[25px] w-[89px] border-x border-b-2 border-x-[#999] border-b-[#217346] bg-white text-[13px] font-medium leading-[22px] text-[#217346]"
      >
        受講者名簿
      </button>
      <button type="button" aria-label="新しいシート" className="ml-8 text-[#777]">
        <Svg w={17} h={17}>
          <circle cx="8.5" cy="8.5" r="7.5" />
          <path d="M8.500 4.500v8M4.500 8.500h8" strokeWidth="2" />
        </Svg>
      </button>
      <div className="ml-auto flex w-[547px] items-center pr-[21px]">
        <Dots />
        <span className="w-[14px]" />
        <ScrollArrow label="左へスクロール" d="M5 0v7L1 3.500z" />
        <div className="flex h-[15px] flex-1 bg-[#dadada]">
          <div className="w-[90%] border border-[#ababab] bg-white" />
        </div>
        <ScrollArrow label="右へスクロール" d="M2 0v7l4-3.500z" />
      </div>
    </div>
  );
}

function StatusBar() {
  return (
    <footer className="flex h-[22px] shrink-0 items-center border-t border-[#c6c6c6] bg-[#f3f2f1] text-xs text-[#444]">
      <span className="w-[75px] pl-2">準備完了</span>
      <button type="button" aria-label="マクロの記録">
        <Svg w={15} h={14}>
          <path d="M6 11.500H.5V.5h13V5M0 2.500h14M2.500 5h3M2.500 7h3M2.500 9h2" />
          <circle cx="9.5" cy="9" r="4" />
          <circle cx="9.5" cy="9" r="1.5" fill="currentColor" />
        </Svg>
      </button>
      <div className="ml-auto flex h-full items-center">
        <span className="mr-[18px]">データの個数: 12</span>
        <button type="button" aria-label="標準" className="flex h-full w-10 items-center justify-center bg-[#c8c6c4] text-[#222]">
          <Svg w={14} h={14}>
            <path d="M.5 .5h13v13H.5zM4.500 0v14M9.500 0v14M0 4.500h14M0 9.500h14" />
          </Svg>
        </button>
        <button type="button" aria-label="ページ レイアウト" className="flex h-full w-10 items-center justify-center">
          <Svg w={14} h={14}>
            <path d="M.5 .5h13v13H.5zM3.500 3.500h7v8h-7zM5 5.500h4M5 7.500h4M5 9.500h4" />
          </Svg>
        </button>
        <button type="button" aria-label="改ページ プレビュー" className="flex h-full w-10 items-center justify-center">
          <Svg w={14} h={14}>
            <path d="M.5 .5h13v13H.5zM4.500 0v7M8.500 0v7M0 7.500h9" />
          </Svg>
        </button>
        <button type="button" aria-label="縮小" className="ml-[6px] mr-[5px]">
          <Svg w={8} h={9}><path d="M0 4.500h8" /></Svg>
        </button>
        <input
          type="range"
          aria-label="ズーム"
          defaultValue={50}
          className="h-3 w-[100px] appearance-none bg-transparent [&::-webkit-slider-runnable-track]:h-px [&::-webkit-slider-runnable-track]:bg-[#a0a0a0] [&::-webkit-slider-thumb]:-mt-[5px] [&::-webkit-slider-thumb]:h-[11px] [&::-webkit-slider-thumb]:w-[5px] [&::-webkit-slider-thumb]:appearance-none [&::-webkit-slider-thumb]:bg-[#666]"
        />
        <button type="button" aria-label="拡大" className="ml-1">
          <Svg w={9} h={9}><path d="M0 4.500h9M4.500 0v9" /></Svg>
        </button>
        <span className="w-[54px] pr-2 text-right">100%</span>
      </div>
    </footer>
  );
}

export default function App() {
  return (
    <div
      lang="ja"
      className="flex h-screen flex-col overflow-hidden bg-[#f3f2f1] font-['Noto_Sans_CJK_JP','Noto_Sans',sans-serif] text-xs text-[#444] [font-feature-settings:'palt']"
    >
      <TitleBar />
      <TabRow />
      <Ribbon />
      <FormulaBar />
      <main className="flex min-h-0 flex-1 bg-[#e6e6e6]">
        <div className="min-w-0 flex-1 overflow-hidden bg-white">
          <Sheet />
        </div>
        <div className="flex w-[21px] flex-col items-center pt-[2px]">
          <ScrollArrow label="上へスクロール" d="M0 5h7L3.500 1z" />
          <div className="w-[15px] flex-1 bg-[#dadada]">
            <div className="h-[65%] border border-[#ababab] bg-white" />
          </div>
          <ScrollArrow label="下へスクロール" d="M0 2h7L3.500 6z" />
        </div>
      </main>
      <SheetTabs />
      <StatusBar />
    </div>
  );
}
